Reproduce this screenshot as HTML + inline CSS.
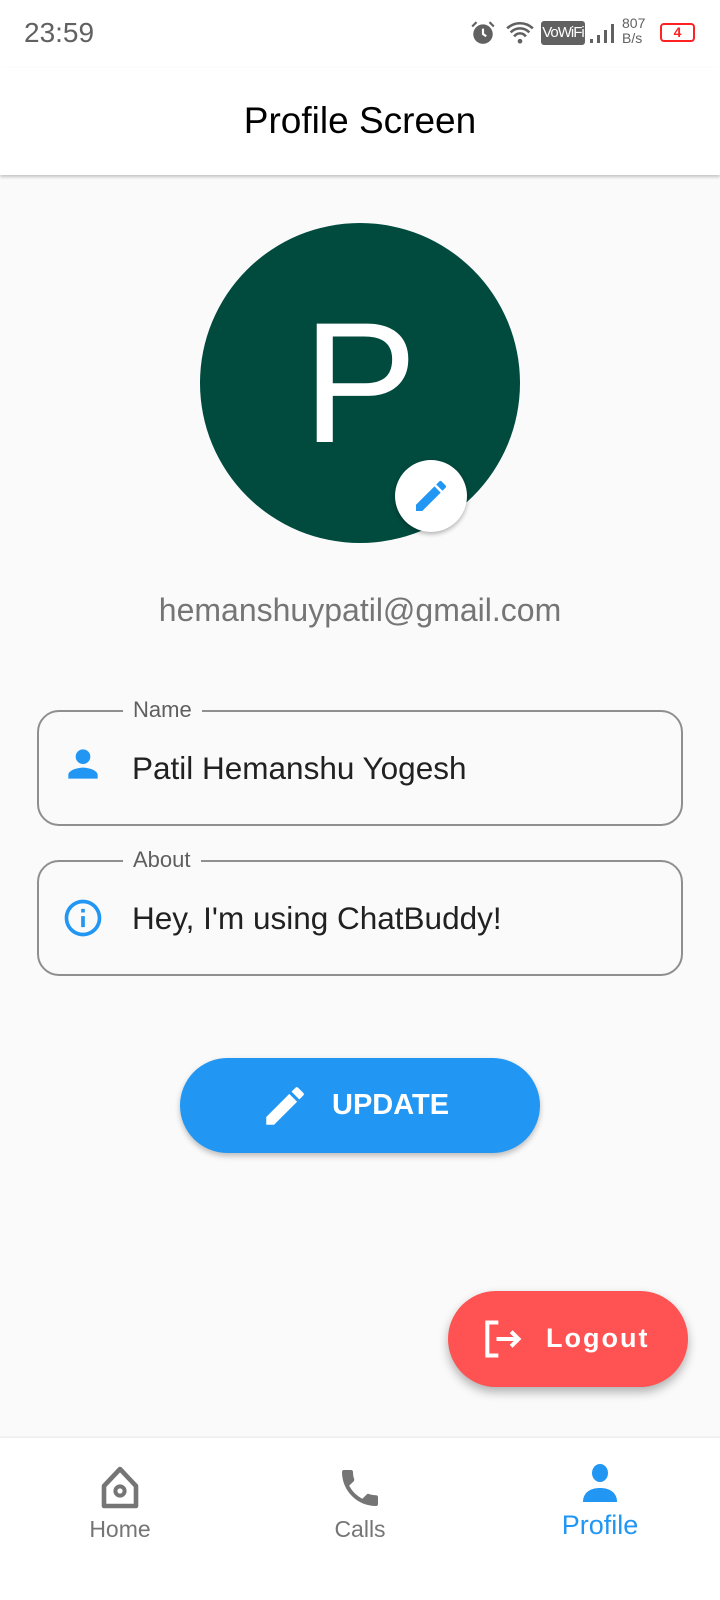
<!DOCTYPE html>
<html><head><meta charset="utf-8"><style>
*{margin:0;padding:0;box-sizing:border-box}
body{width:720px;height:1600px;background:#fafafa;font-family:"Liberation Sans",Roboto,sans-serif;position:relative;overflow:hidden}
.abs{position:absolute}
.status{top:0;left:0;width:720px;height:68px;background:#fff}
.appbar{top:68px;left:0;width:720px;height:107px;background:#fff;box-shadow:0 2px 3px rgba(0,0,0,.22)}
.field{left:37px;width:646px;height:116px;border:2px solid #8f8f8f;border-radius:22px}
.lbl{top:-15px;left:84px;background:#fafafa;padding:0 10px;font-size:22px;color:#5f5f5f}
.val{left:93px;top:38px;font-size:31.5px;color:#212121}
</style></head><body>
<div class="abs status">
  <div class="abs" style="left:24px;top:17px;font-size:28px;color:#616161">23:59</div>
  <svg class="abs" style="left:470px;top:20px" width="26" height="26" viewBox="0 0 24 24"><circle cx="12" cy="13" r="9" fill="#616161"/><path d="M12 8v5l3 2" stroke="#fff" stroke-width="2" fill="none"/><path d="M2 6l4-4M22 6l-4-4" stroke="#616161" stroke-width="2"/></svg>
  <svg class="abs" style="left:506px;top:20px" width="28" height="26" viewBox="0 0 24 22"><path d="M1 7a16 16 0 0 1 22 0M4 10.5a11 11 0 0 1 16 0M7 14a6 6 0 0 1 10 0" stroke="#616161" stroke-width="2.2" fill="none"/><circle cx="12" cy="18" r="2" fill="#616161"/></svg>
  <div class="abs" style="left:541px;top:21px;width:44px;height:24px;background:#616161;border-radius:3px;color:#fff;font-size:15px;line-height:24px;text-align:center;letter-spacing:-1px;overflow:hidden">VoWiFi</div>
  <svg class="abs" style="left:589px;top:22px" width="26" height="22"><rect x="1" y="17" width="3" height="4" fill="#616161"/><rect x="8" y="13" width="3" height="8" fill="#616161"/><rect x="15" y="8" width="3" height="13" fill="#616161"/><rect x="22" y="2" width="3" height="19" fill="#616161"/></svg>
  <div class="abs" style="left:622px;top:16px;font-size:14px;line-height:15px;color:#616161">807<br>B/s</div>
  <div class="abs" style="left:660px;top:23px;width:35px;height:19px;border:2px solid #f22;border-radius:4px;color:#f22;font-size:14px;line-height:15px;text-align:center;font-weight:bold">4</div>
</div>
<div class="abs appbar"><div style="text-align:center;font-size:37px;line-height:105px;color:#000">Profile Screen</div></div>

<div class="abs" style="left:200px;top:223px;width:320px;height:320px;border-radius:50%;background:#004a3e;color:#fff;font-size:172px;text-align:center;line-height:320px">P</div>
<div class="abs" style="left:395px;top:460px;width:72px;height:72px;border-radius:50%;background:#fff;box-shadow:0 2px 5px rgba(0,0,0,.3)">
 <svg style="position:absolute;left:16px;top:16px" width="40" height="40" viewBox="0 0 24 24"><path fill="#2196f3" d="M3 17.25V21h3.75L17.81 9.94l-3.75-3.75L3 17.25zM20.71 7.04a1 1 0 0 0 0-1.41l-2.34-2.34a1 1 0 0 0-1.41 0l-1.83 1.83 3.75 3.75 1.83-1.83z"/></svg>
</div>
<div class="abs" style="left:0;width:720px;top:592px;text-align:center;font-size:32px;color:#757575">hemanshuypatil@gmail.com</div>

<div class="abs field" style="top:710px"><div class="abs lbl">Name</div>
 <svg class="abs" style="left:22px;top:30px" width="44" height="44" viewBox="0 0 24 24"><path fill="#2196f3" d="M12 12a4 4 0 1 0 0-8 4 4 0 0 0 0 8zm0 2c-2.7 0-8 1.3-8 4v2h16v-2c0-2.7-5.3-4-8-4z"/></svg>
 <div class="abs val">Patil Hemanshu Yogesh</div></div>
<div class="abs field" style="top:860px"><div class="abs lbl">About</div>
 <svg class="abs" style="left:22px;top:34px" width="44" height="44" viewBox="0 0 24 24"><path fill="#2196f3" d="M11 7h2v2h-2zm0 4h2v6h-2zm1-9C6.48 2 2 6.480 2 12s4.48 10 10 10 10-4.48 10-10S17.52 2 12 2zm0 18c-4.41 0-8-3.59-8-8s3.59-8 8-8 8 3.590 8 8-3.59 8-8 8z"/></svg>
 <div class="abs val">Hey, I'm using ChatBuddy!</div></div>

<div class="abs" style="left:180px;top:1058px;width:360px;height:95px;border-radius:48px;background:#2196f3;box-shadow:0 3px 6px rgba(0,0,0,.25)">
 <svg class="abs" style="left:80px;top:23px" width="50" height="50" viewBox="0 0 24 24"><path fill="#fff" d="M3 17.25V21h3.75L17.81 9.94l-3.75-3.75L3 17.25zM20.71 7.04a1 1 0 0 0 0-1.41l-2.34-2.34a1 1 0 0 0-1.41 0l-1.83 1.83 3.75 3.75 1.83-1.83z"/></svg>
 <div class="abs" style="left:152px;top:31px;font-size:29px;font-weight:bold;color:#fff">UPDATE</div></div>

<div class="abs" style="left:448px;top:1291px;width:240px;height:96px;border-radius:48px;background:#ff5252;box-shadow:0 5px 10px rgba(0,0,0,.3)">
 <svg class="abs" style="left:32px;top:26px" width="44" height="44" viewBox="0 0 24 24"><path d="M10 3H4v18h6" stroke="#fff" stroke-width="2.2" fill="none"/><path d="M9 12h12M17 8l4 4-4 4" stroke="#fff" stroke-width="2.2" fill="none"/></svg>
 <div class="abs" style="left:98px;top:32px;font-size:27px;font-weight:bold;color:#fff;letter-spacing:2px">Logout</div></div>

<div class="abs" style="left:0;top:1438px;width:720px;height:162px;background:#fff;box-shadow:0 -1px 2px rgba(0,0,0,.08)">
 <svg class="abs" style="left:96px;top:26px" width="48" height="48" viewBox="0 0 24 24"><path d="M12 2.5L4 11v10h16V11z" stroke="#757575" stroke-width="2.3" fill="none" stroke-linejoin="round"/><circle cx="12" cy="13.5" r="2.3" stroke="#757575" stroke-width="2" fill="none"/></svg>
 <div class="abs" style="left:60px;width:120px;top:78px;text-align:center;font-size:23px;color:#757575">Home</div>
 <svg class="abs" style="left:336px;top:26px" width="48" height="48" viewBox="0 0 24 24"><path fill="#757575" d="M6.6 10.8c1.4 2.8 3.8 5.1 6.6 6.6l2.2-2.2c.3-.3.7-.4 1-.2 1.1.4 2.3.6 3.6.6.6 0 1 .4 1 1V20c0 .6-.4 1-1 1C10.6 21 3 13.4 3 4c0-.6.4-1 1-1h3.5c.6 0 1 .4 1 1 0 1.3.2 2.5.6 3.6.1.3 0 .7-.2 1z"/></svg>
 <div class="abs" style="left:300px;width:120px;top:78px;text-align:center;font-size:23px;color:#757575">Calls</div>
 <svg class="abs" style="left:576px;top:22px" width="48" height="48" viewBox="0 0 24 24"><ellipse cx="12" cy="6.5" rx="4" ry="4.5" fill="#2196f3"/><path fill="#2196f3" d="M3.5 21c0-5 4-7 8.5-7s8.5 2 8.5 7z"/></svg>
 <div class="abs" style="left:540px;width:120px;top:72px;text-align:center;font-size:27px;color:#2196f3">Profile</div>
</div>
</body></html>
